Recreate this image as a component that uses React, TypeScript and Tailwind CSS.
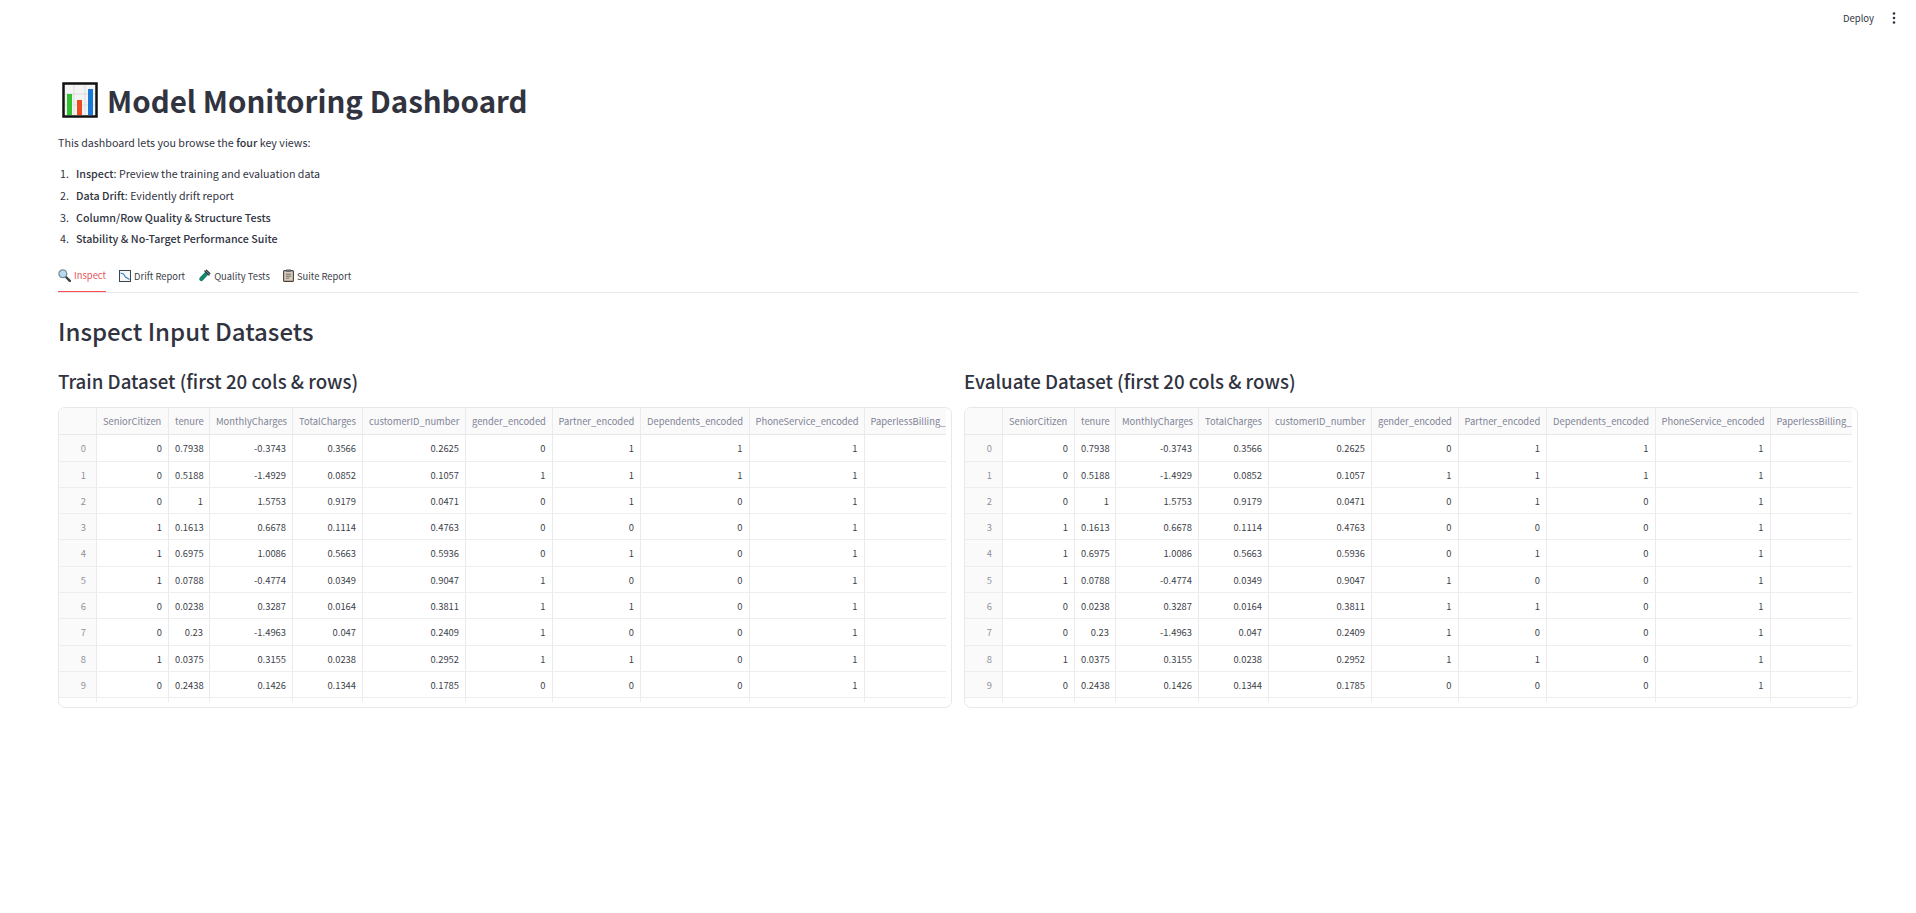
const columns = [
  { name: "SeniorCitizen", width: "w-[72px]" },
  { name: "tenure", width: "w-[41px]" },
  { name: "MonthlyCharges", width: "w-[83px]" },
  { name: "TotalCharges", width: "w-[70px]" },
  { name: "customerID_number", width: "w-[103px]" },
  { name: "gender_encoded", width: "w-[86.5px]" },
  { name: "Partner_encoded", width: "w-[88.5px]" },
  { name: "Dependents_encoded", width: "w-[108.5px]" },
  { name: "PhoneService_encoded", width: "w-[115px]" },
  { name: "PaperlessBilling_", width: "w-[82px]" },
];

const rows = [
  ["0", "0.7938", "-0.3743", "0.3566", "0.2625", "0", "1", "1", "1"],
  ["0", "0.5188", "-1.4929", "0.0852", "0.1057", "1", "1", "1", "1"],
  ["0", "1", "1.5753", "0.9179", "0.0471", "0", "1", "0", "1"],
  ["1", "0.1613", "0.6678", "0.1114", "0.4763", "0", "0", "0", "1"],
  ["1", "0.6975", "1.0086", "0.5663", "0.5936", "0", "1", "0", "1"],
  ["1", "0.0788", "-0.4774", "0.0349", "0.9047", "1", "0", "0", "1"],
  ["0", "0.0238", "0.3287", "0.0164", "0.3811", "1", "1", "0", "1"],
  ["0", "0.23", "-1.4963", "0.047", "0.2409", "1", "0", "0", "1"],
  ["1", "0.0375", "0.3155", "0.0238", "0.2952", "1", "1", "0", "1"],
  ["0", "0.2438", "0.1426", "0.1344", "0.1785", "0", "0", "0", "1"],
];

function BarChartIcon() {
  return (
    <svg width="36" height="36" viewBox="0 0 36 36" className="shrink-0">
      <rect x="1.5" y="1.5" width="33" height="33" fill="#f4f4f4" stroke="#111" strokeWidth="2.5" />
      <path d="M12 3v30M23 3v30M3 12h30M3 23h30" stroke="#dddddd" strokeWidth="1" />
      <rect x="5" y="12" width="5" height="21" fill="#2fc12f" />
      <rect x="15" y="18" width="5" height="15" fill="#ee4a22" />
      <rect x="26" y="7" width="5" height="26" fill="#1a78d6" />
    </svg>
  );
}

function SearchIcon() {
  return (
    <svg width="13" height="13" viewBox="0 0 13 13" className="shrink-0">
      <path d="M7.5 7.5l4.3 4.3" stroke="#39424e" strokeWidth="2.4" strokeLinecap="round" />
      <circle cx="4.8" cy="4.8" r="3.9" fill="#b5dcef" stroke="#7d8c9a" strokeWidth="1.3" />
    </svg>
  );
}

function DriftIcon() {
  return (
    <svg width="12" height="12" viewBox="0 0 12 12" className="shrink-0">
      <rect x="0.5" y="0.5" width="11" height="11" fill="#f5f7f9" stroke="#3a4552" strokeWidth="1" />
      <path d="M1.5 3l3 1 2 3 4 2.5" fill="none" stroke="#3f86c9" strokeWidth="1.2" />
    </svg>
  );
}

function TubeIcon() {
  return (
    <svg width="13" height="13" viewBox="0 0 13 13" className="shrink-0">
      <path d="M7.6 2.6l2.8 2.8-5.6 6a2 2 0 0 1-3-3z" fill="#16856f" />
      <path d="M6.9 1.9l4.2 4.2" stroke="#2f3d44" strokeWidth="1.4" strokeLinecap="round" />
      <path d="M8.4 1.2l3.4 3.4" stroke="#2f3d44" strokeWidth="1.4" strokeLinecap="round" />
    </svg>
  );
}

function ClipboardIcon() {
  return (
    <svg width="11" height="13" viewBox="0 0 11 13" className="shrink-0">
      <rect x="0.6" y="1.6" width="9.8" height="10.8" rx="1" fill="#d8cfc0" stroke="#4b4038" strokeWidth="1.1" />
      <rect x="3.2" y="0.4" width="4.6" height="2.6" fill="#6a6d72" />
      <path d="M2.8 5.2h5.4M2.8 7.2h5.4M2.8 9.2h3.4" stroke="#6a6258" strokeWidth="0.9" />
    </svg>
  );
}

function DataTable() {
  return (
    <div className="h-[301px] overflow-hidden rounded-[7px] border border-[#e6e8ec] bg-white pr-[5px]">
      <div className="h-full overflow-hidden">
        <div className="flex h-[27px] w-max border-b border-[#e6e8ec] bg-[#fafafb] text-[9.4px] leading-[26px] text-[#808495]">
          <div className="w-[38px] shrink-0 border-r border-[#e9ebee]" />
          {columns.map((col) => (
            <div
              key={col.name}
              className={`${col.width} shrink-0 overflow-hidden whitespace-nowrap border-r border-[#e9ebee] px-[6px]`}
            >
              {col.name}
            </div>
          ))}
        </div>
        {rows.map((row, i) => (
          <div key={i} className="flex h-[26.3px] w-max border-b border-[#eceef1] text-[9.4px] leading-[26.4px] text-[#3d3f4b]">
            <div className="w-[38px] shrink-0 border-r border-[#e9ebee] bg-[#fafafb] pr-[10px] text-right text-[#8f939b]">
              {i}
            </div>
            {columns.map((col, j) => (
              <div key={col.name} className={`${col.width} shrink-0 border-r border-[#e9ebee] px-[6px] text-right`}>
                {row[j]}
              </div>
            ))}
          </div>
        ))}
        <div className="flex h-[4px] w-max">
          <div className="w-[38px] shrink-0 border-r border-[#e9ebee]" />
          {columns.map((col) => (
            <div key={col.name} className={`${col.width} shrink-0 border-r border-[#e9ebee]`} />
          ))}
        </div>
      </div>
    </div>
  );
}

function Tab({ icon, label, active }: { icon: React.ReactNode; label: string; active?: boolean }) {
  return (
    <div
      className={`flex h-[30px] items-center gap-[3px] pb-[2px] text-[9.4px] ${
        active ? "border-b border-[#ff4b4b] text-[#e8555a]" : "text-[#3c3e4a]"
      }`}
    >
      {icon}
      <span>{label}</span>
    </div>
  );
}

export default function App() {
  return (
    <div className="relative min-h-[913px] bg-white font-['Noto_Sans_CJK_SC','Source_Sans_Pro',sans-serif] text-[#31333f]">
      {/* toolbar */}
      <div className="flex h-[36px] items-center justify-end pr-[20px]">
        <span className="text-[9.5px] text-[#31333f]">Deploy</span>
        <svg width="4" height="12" viewBox="0 0 4 12" className="ml-[18px]">
          <circle cx="2" cy="1.5" r="1.3" fill="#31333f" />
          <circle cx="2" cy="6" r="1.3" fill="#31333f" />
          <circle cx="2" cy="10.5" r="1.3" fill="#31333f" />
        </svg>
      </div>

      <main className="px-[58px] pt-[45px]">
        <h1 className="flex h-[38px] items-center gap-[9px] pl-[4px] text-[29.5px] font-bold leading-[38px]">
          <BarChartIcon />
          <span>Model Monitoring Dashboard</span>
        </h1>
        <p className="mt-[13.5px] text-[10.7px] leading-[20px]">
          This dashboard lets you browse the <b className="font-medium">four</b> key views:
        </p>
        <ol className="mt-[11px] text-[10.7px]">
          <li className="flex h-[21.7px] items-center"><span className="w-[18px] pl-[2px]">1.</span><span><b className="font-medium">Inspect</b>: Preview the training and evaluation data</span></li>
          <li className="flex h-[21.7px] items-center"><span className="w-[18px] pl-[2px]">2.</span><span><b className="font-medium">Data Drift</b>: Evidently drift report</span></li>
          <li className="flex h-[21.7px] items-center"><span className="w-[18px] pl-[2px]">3.</span><b className="font-medium">Column/Row Quality &amp; Structure Tests</b></li>
          <li className="flex h-[21.7px] items-center"><span className="w-[18px] pl-[2px]">4.</span><b className="font-medium">Stability &amp; No-Target Performance Suite</b></li>
        </ol>

        <div className="mt-[11.5px] flex gap-[13px] border-b border-[#e6e8ec]">
          <Tab icon={<SearchIcon />} label="Inspect" active />
          <Tab icon={<DriftIcon />} label="Drift Report" />
          <Tab icon={<TubeIcon />} label="Quality Tests" />
          <Tab icon={<ClipboardIcon />} label="Suite Report" />
        </div>

        <h2 className="mt-[20.5px] h-[36px] text-[24px] font-medium leading-[36px]">Inspect Input Datasets</h2>

        <div className="mt-[17px] grid grid-cols-2 gap-[12px]">
          <section>
            <h3 className="h-[41px] text-[18.7px] font-medium leading-[30px]">Train Dataset (first 20 cols &amp; rows)</h3>
            <DataTable />
          </section>
          <section>
            <h3 className="h-[41px] text-[18.7px] font-medium leading-[30px]">Evaluate Dataset (first 20 cols &amp; rows)</h3>
            <DataTable />
          </section>
        </div>
      </main>
    </div>
  );
}
